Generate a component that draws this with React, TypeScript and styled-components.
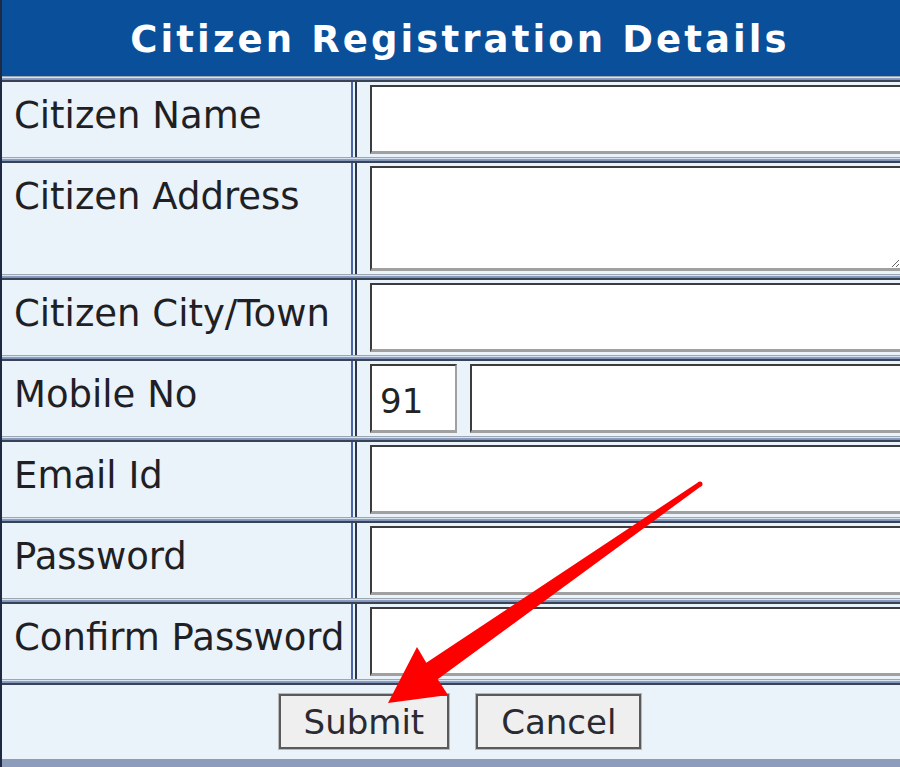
import React from "react";
import styled, { createGlobalStyle } from "styled-components";

const Global = createGlobalStyle`
  html, body { margin: 0; padding: 0; background: #ffffff; overflow: hidden; }
  body { font-family: "DejaVu Sans", Verdana, sans-serif; }
`;

const Page = styled.div`
  position: relative;
  width: 900px;
  height: 767px;
  overflow: hidden;
`;

const Table = styled.div`
  width: 918px;
  display: flex;
  flex-direction: column;
  background: #eaf2fa;
  border-left: 2px solid #1e2a44;
  box-sizing: border-box;
`;

const Header = styled.div`
  height: 76px;
  background: #0a4f9a;
  color: #ffffff;
  display: flex;
  align-items: center;
  justify-content: center;
  font-family: "DejaVu Sans", Verdana, sans-serif;
  font-weight: bold;
  font-size: 37px;
  letter-spacing: 3.1px;
  padding-top: 2px;
  box-sizing: border-box;
`;

const band = `linear-gradient(to bottom, #9ea6b2 0px, #9ea6b2 1px, #d9e3f1 1px, #d9e3f1 2px, #8ea2c6 2px, #7c90b4 4px, #3a4356 4px, #3a4356 6px)`;

const Row = styled.div`
  display: grid;
  grid-template-columns: 351px 1fr;
  padding-top: 6px;
  background: ${band} top / 100% 6px no-repeat, #eaf2fa;
`;

const Label = styled.div`
  border-right: 2px solid #4a66a6;
  padding: 13px 0 0 12px;
  font-size: 37px;
  color: #1f1f24;
  white-space: nowrap;
  line-height: 42px;
`;

const Field = styled.div`
  margin-left: 2px;
  border-left: 2px solid #2d3548;
  padding: 3px 16px 3px 13px;
  display: flex;
  gap: 13px;
`;

const TextInput = styled.input<{ $w?: number }>`
  box-sizing: border-box;
  height: 69px;
  flex: ${(p) => (p.$w ? `0 0 ${p.$w}px` : "1 1 auto")};
  min-width: 0;
  margin: 0;
  background: #ffffff;
  border-style: solid;
  border-width: 2px 2px 3px 2px;
  border-color: #3c3c3c #a0a0a0 #a0a0a0 #3c3c3c;
  font-family: "DejaVu Sans", Verdana, sans-serif;
  font-size: 34px;
  color: #222;
  padding: 6px 8px 0;
  outline: none;
`;

const TextArea = styled.textarea`
  box-sizing: border-box;
  height: 105px;
  flex: 1 1 auto;
  margin: 0;
  background: #ffffff;
  border-style: solid;
  border-width: 2px 2px 3px 2px;
  border-color: #3c3c3c #a0a0a0 #a0a0a0 #3c3c3c;
  font-family: "DejaVu Sans", Verdana, sans-serif;
  font-size: 34px;
  outline: none;
`;

const ButtonRow = styled.div`
  display: flex;
  justify-content: center;
  gap: 27px;
  padding: 15px 0 10px;
  background: ${band} top / 100% 6px no-repeat, #eaf2fa;
  border-bottom: 10px solid #8c9cba;
`;

const Button = styled.button`
  height: 55px;
  padding: 0 23px;
  margin: 0;
  background: #efefef;
  border: 2px solid #5a5a5a;
  box-shadow: 0 0 0 1px #b8b8b8;
  font-family: "DejaVu Sans", Verdana, sans-serif;
  font-size: 34px;
  color: #2a2a33;
`;

const Arrow = styled.svg`
  position: absolute;
  left: 0;
  top: 0;
  pointer-events: none;
`;

const rows: { label: string; kind: "input" | "area" | "mobile" }[] = [
  { label: "Citizen Name", kind: "input" },
  { label: "Citizen Address", kind: "area" },
  { label: "Citizen City/Town", kind: "input" },
  { label: "Mobile No", kind: "mobile" },
  { label: "Email Id", kind: "input" },
  { label: "Password", kind: "input" },
  { label: "Confirm Password", kind: "input" },
];

export default function App() {
  return (
    <Page>
      <Global />
      <Table>
        <Header>Citizen Registration Details</Header>
        {rows.map((r) => (
          <Row key={r.label}>
            <Label>{r.label}</Label>
            <Field>
              {r.kind === "area" && <TextArea />}
              {r.kind === "input" && <TextInput type="text" />}
              {r.kind === "mobile" && (
                <>
                  <TextInput $w={87} defaultValue="91" />
                  <TextInput type="text" />
                </>
              )}
            </Field>
          </Row>
        ))}
        <ButtonRow>
          <Button>Submit</Button>
          <Button>Cancel</Button>
        </ButtonRow>
      </Table>
      <Arrow width="900" height="767" viewBox="0 0 900 767">
        <polygon
          fill="#ff0000"
          points="698.6,482 426.3,662.8 417,647 388,703 448,695 437.7,679.2 701.4,486"
        />
        <circle cx="700" cy="484" r="2.5" fill="#ff0000" />
      </Arrow>
    </Page>
  );
}
